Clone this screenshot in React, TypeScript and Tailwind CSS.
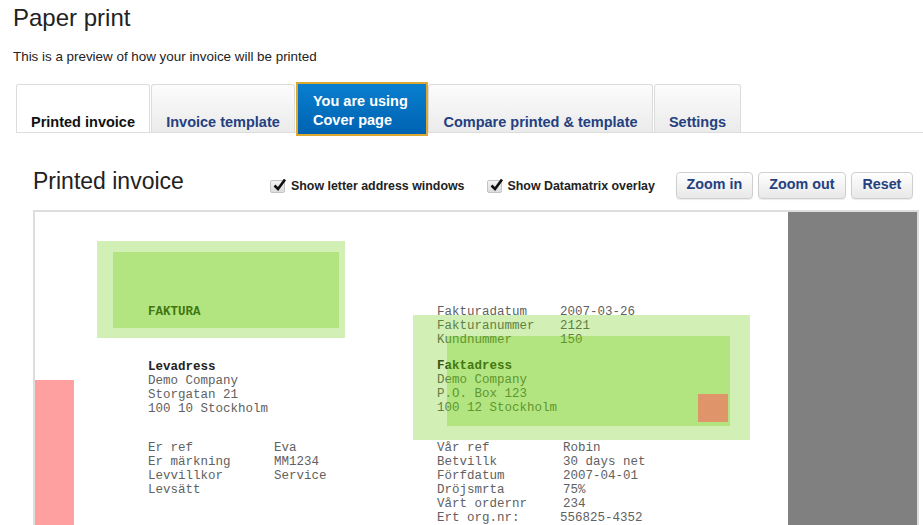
import React from 'react';

const navy = 'text-[#24407f]';

const Checkbox: React.FC<{ label: string }> = ({ label }) => (
  <label className="flex items-center gap-[6px] mt-[3px]">
    <span className="relative w-[15px] h-[13px] rounded-[2px] border border-[#c4c4c4] bg-linear-to-b from-[#f4f4f4] to-[#dcdcdc]">
      <svg className="absolute left-[1px] -top-[4px]" width="15" height="15" viewBox="0 0 15 15">
        <path d="M2.5 8.5 L6 12 L13 2.5" fill="none" stroke="#111" strokeWidth="2.6" strokeLinejoin="miter" />
      </svg>
    </span>
    <span className="text-[12.4px] leading-[16px] font-bold text-[#222]">{label}</span>
  </label>
);

const Button: React.FC<{ label: string; width: string }> = ({ label, width }) => (
  <button
    className={`${width} h-[27px] mt-[1px] rounded-[4px] border border-[#cfcfcf] bg-linear-to-b from-white to-[#e8e8e8] shadow-[0_1px_1px_rgba(0,0,0,0.08)] text-[14.3px] font-bold ${navy}`}
  >
    {label}
  </button>
);

const Tab: React.FC<{ label: string; width: string; selected?: boolean }> = ({ label, width, selected }) => (
  <div
    className={`${width} h-[48px] flex items-end justify-center pb-[2px] border border-b-0 border-[#dcdcdc] rounded-t-[3px] text-[14.5px] leading-[16px] font-bold ${
      selected ? 'bg-white text-[#111]' : `bg-linear-to-b from-[#fcfcfc] to-[#ebebeb] ${navy}`
    }`}
  >
    {label}
  </div>
);

const Rows: React.FC<{ rows: [string, string][]; col: string; last?: string }> = ({ rows, col, last }) => (
  <div className={`grid ${col} text-[12.5px] leading-[14px] text-[#616161] whitespace-pre`}>
    {rows.map(([k, v], i) => (
      <React.Fragment key={k}>
        <span>{k}</span>
        <span className={i === rows.length - 1 && last ? last : ''}>{v}</span>
      </React.Fragment>
    ))}
  </div>
);

const Lines: React.FC<{ title: string; lines: string[] }> = ({ title, lines }) => (
  <div className="text-[12.5px] leading-[14px] text-[#616161] whitespace-pre">
    <div className="font-bold text-[#222]">{title}</div>
    {lines.map((l) => (
      <div key={l}>{l}</div>
    ))}
  </div>
);

export default function App() {
  return (
    <div
      className="h-[525px] overflow-hidden bg-white pl-[13px] text-[#222]"
      style={{ fontFamily: '"Liberation Sans", Arial, sans-serif' }}
    >
      <h1 className="pt-[4px] text-[24px] leading-[28px] font-normal">Paper print</h1>
      <p className="mt-[17px] text-[13.4px] leading-[16px]">This is a preview of how your invoice will be printed</p>

      {/* tabs */}
      <div className="mt-[17px] ml-[3px] flex items-end border-b border-[#dddddd]">
        <Tab label="Printed invoice" width="w-[134px]" selected />
        <div className="w-[1px]" />
        <Tab label="Invoice template" width="w-[144px]" />
        <div className="w-[1px]" />
        <div className="w-[132px] h-[54px] -mb-[4px] border-2 border-[#dba832] bg-linear-to-b from-[#0a7fcf] to-[#0062b2] pt-[8px] px-[15px] text-[14.5px] leading-[19px] font-bold text-white">
          <div>You are using</div>
          <div>Cover page</div>
        </div>
        <Tab label="Compare printed & template" width="w-[225px]" />
        <div className="w-[1px]" />
        <Tab label="Settings" width="w-[87px]" />
      </div>

      {/* preview section */}
      <div className="ml-[20px] mr-[4px] mt-[32px]">
        <div className="h-[39px] flex items-center">
          <h2 className="w-[237px] self-start mt-[2px] text-[23px] leading-[28px] font-normal">Printed invoice</h2>
          <Checkbox label="Show letter address windows" />
          <div className="w-[22px]" />
          <Checkbox label="Show Datamatrix overlay" />
          <div className="w-[21px]" />
          <div className="flex gap-[5px]">
            <Button label="Zoom in" width="w-[77px]" />
            <Button label="Zoom out" width="w-[88px]" />
            <Button label="Reset" width="w-[62px]" />
          </div>
        </div>

        <div className="mt-[6px] h-[400px] border-2 border-[#dddddd] flex">
          <div
            className="relative flex-1 overflow-hidden bg-white"
            style={{ fontFamily: '"Liberation Mono", "Courier New", monospace' }}
          >
            <div className="absolute left-0 top-[168px] w-[39px] h-[300px] bg-[#ffa0a0]" />

            <div className="absolute left-[113px] top-[93px] text-[12.5px] leading-[14px] font-bold text-[#222]">FAKTURA</div>

            <div className="absolute left-[113px] top-[148px]">
              <Lines title="Levadress" lines={['Demo Company', 'Storgatan 21', '100 10 Stockholm']} />
            </div>

            <div className="absolute left-[113px] top-[229px]">
              <Rows
                col="grid-cols-[126px_auto]"
                rows={[
                  ['Er ref', 'Eva'],
                  ['Er märkning', 'MM1234'],
                  ['Levvillkor', 'Service'],
                  ['Levsätt', ''],
                ]}
              />
            </div>

            <div className="absolute left-[402px] top-[93px]">
              <Rows
                col="grid-cols-[123px_auto]"
                rows={[
                  ['Fakturadatum', '2007-03-26'],
                  ['Fakturanummer', '2121'],
                  ['Kundnummer', '150'],
                ]}
              />
            </div>

            <div className="absolute left-[402px] top-[147px]">
              <Lines title="Faktadress" lines={['Demo Company', 'P.O. Box 123', '100 12 Stockholm']} />
            </div>

            <div className="absolute left-[402px] top-[229px]">
              <Rows
                col="grid-cols-[126px_auto]"
                last="-ml-[3px]"
                rows={[
                  ['Vår ref', 'Robin'],
                  ['Betvillk', '30 days net'],
                  ['Förfdatum', '2007-04-01'],
                  ['Dröjsmrta', '75%'],
                  ['Vårt ordernr', '234'],
                  ['Ert org.nr:', '556825-4352'],
                ]}
              />
            </div>

            {/* address window overlays */}
            <div className="absolute left-[62px] top-[29px] w-[248px] h-[97px] bg-[rgba(99,203,0,0.29)]" />
            <div className="absolute left-[78px] top-[40px] w-[226px] h-[76px] bg-[rgba(99,203,0,0.29)]" />
            <div className="absolute left-[378px] top-[103px] w-[337px] h-[125px] bg-[rgba(99,203,0,0.29)]" />
            <div className="absolute left-[412px] top-[124px] w-[283px] h-[90px] bg-[rgba(99,203,0,0.29)]" />
            <div className="absolute left-[663px] top-[182px] w-[30px] h-[28px] bg-[#e0946a]" />
          </div>
          <div className="w-[129px] bg-[#808080]" />
        </div>
      </div>
    </div>
  );
}
